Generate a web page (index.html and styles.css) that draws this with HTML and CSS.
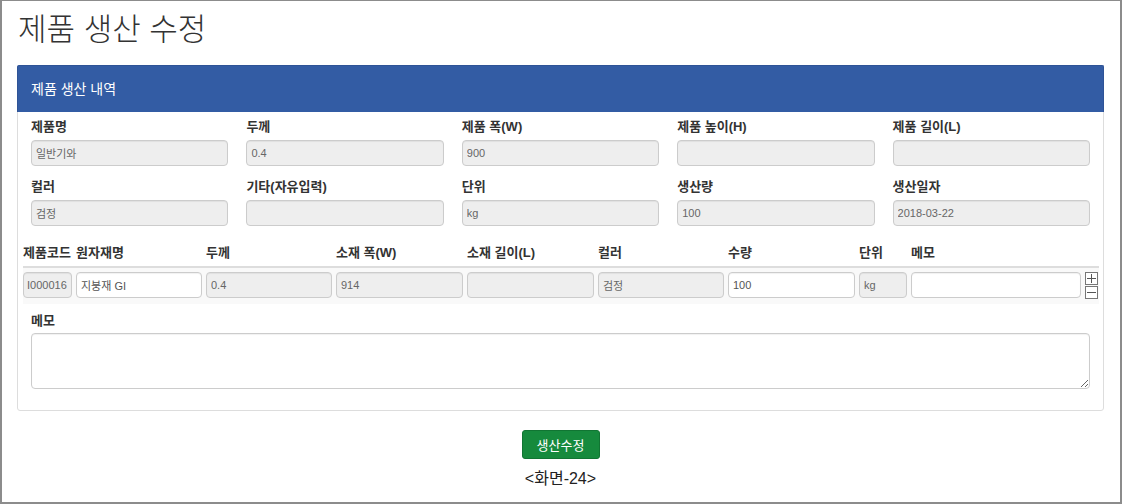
FILE: index.html
```html
<!DOCTYPE html>
<html lang="ko">
<head>
    <meta charset="UTF-8">
    <meta name="viewport" content="width=device-width, initial-scale=1.0">
    <title>제품 생산 수정</title>
    <link rel="stylesheet" href="styles.css">
</head>
<body>
    <div class="frame">
        <h1 class="page-title">제품 생산 수정</h1>

        <div class="panel">
            <div class="panel-heading">제품 생산 내역</div>
            <div class="panel-body">
                <div class="fields">
                    <div class="field">
                        <label>제품명</label>
                        <input type="text" class="form-control" value="일반기와" disabled>
                    </div>
                    <div class="field">
                        <label>두께</label>
                        <input type="text" class="form-control" value="0.4" disabled>
                    </div>
                    <div class="field">
                        <label>제품 폭(W)</label>
                        <input type="text" class="form-control" value="900" disabled>
                    </div>
                    <div class="field">
                        <label>제품 높이(H)</label>
                        <input type="text" class="form-control" value="" disabled>
                    </div>
                    <div class="field">
                        <label>제품 길이(L)</label>
                        <input type="text" class="form-control" value="" disabled>
                    </div>
                    <div class="field">
                        <label>컬러</label>
                        <input type="text" class="form-control" value="검정" disabled>
                    </div>
                    <div class="field">
                        <label>기타(자유입력)</label>
                        <input type="text" class="form-control" value="" disabled>
                    </div>
                    <div class="field">
                        <label>단위</label>
                        <input type="text" class="form-control" value="kg" disabled>
                    </div>
                    <div class="field">
                        <label>생산량</label>
                        <input type="text" class="form-control" value="100" disabled>
                    </div>
                    <div class="field">
                        <label>생산일자</label>
                        <input type="text" class="form-control" value="2018-03-22" disabled>
                    </div>
                </div>

                <div class="material-table">
                    <div class="material-head">
                        <span>제품코드</span>
                        <span>원자재명</span>
                        <span>두께</span>
                        <span>소재 폭(W)</span>
                        <span>소재 길이(L)</span>
                        <span>컬러</span>
                        <span>수량</span>
                        <span>단위</span>
                        <span>메모</span>
                        <span></span>
                    </div>
                    <div class="material-row">
                        <input type="text" class="form-control code" value="I000016" disabled>
                        <input type="text" class="form-control" value="지붕재 GI">
                        <input type="text" class="form-control" value="0.4" disabled>
                        <input type="text" class="form-control" value="914" disabled>
                        <input type="text" class="form-control" value="" disabled>
                        <input type="text" class="form-control" value="검정" disabled>
                        <input type="text" class="form-control" value="100">
                        <input type="text" class="form-control" value="kg" disabled>
                        <input type="text" class="form-control" value="">
                        <div class="row-buttons">
                            <button class="icon-btn" title="추가">
                                <svg width="13" height="13" viewBox="0 0 13 13"><rect x="0.5" y="0.5" width="12" height="12" fill="#fff" stroke="#777"/><path d="M6.5 2v9M2 6.5h9" stroke="#555" stroke-width="1"/></svg>
                            </button>
                            <button class="icon-btn" title="삭제">
                                <svg width="13" height="13" viewBox="0 0 13 13"><rect x="0.5" y="0.5" width="12" height="12" fill="#fff" stroke="#777"/><path d="M2 6.5h9" stroke="#555" stroke-width="1"/></svg>
                            </button>
                        </div>
                    </div>
                </div>

                <div class="memo">
                    <label>메모</label>
                    <textarea class="form-control memo-box"></textarea>
                </div>
            </div>
        </div>

        <div class="actions">
            <button class="btn-save">생산수정</button>
            <p class="caption">&lt;화면-24&gt;</p>
        </div>
    </div>
</body>
</html>
```

FILE: styles.css
```css
/* 전체 */
body {
    margin: 0;
    padding: 0;
    font-family: "Liberation Sans", "Noto Sans CJK KR", sans-serif;
    background-color: #fff;
    color: #333;
}

.frame {
    height: 504px;
    box-sizing: border-box;
    border: 2px solid #8c8c8c;
    border-top-width: 1px;
    padding: 11px 16px 0 15px;
}

.page-title {
    margin: 0 0 17px 1px;
    font-size: 31px;
    line-height: 36px;
    font-weight: 300;
    color: #333;
}

/* 패널 */
.panel {
    border: 1px solid #ddd;
    border-radius: 3px;
}

.panel-heading {
    background-color: #335ca4;
    color: #fff;
    font-size: 14px;
    height: 46px;
    line-height: 46px;
    padding: 0 13px;
    border-radius: 2px 2px 0 0;
    margin: -1px -1px 0 -1px;
    border: 1px solid #2e5396;
    border-bottom: none;
}

.panel-body {
    padding: 6px 13px 21px 13px;
}

.fields {
    display: grid;
    grid-template-columns: repeat(5, 1fr);
    column-gap: 18px;
    row-gap: 12px;
}

.field label,
.memo label {
    display: block;
    font-size: 13px;
    font-weight: bold;
    line-height: 18px;
    margin-bottom: 4px;
    color: #333;
}

.form-control {
    display: block;
    width: 100%;
    height: 26px;
    box-sizing: border-box;
    padding: 0 4px;
    font-family: "Liberation Sans", "Noto Sans CJK KR", sans-serif;
    font-size: 11px;
    color: #555;
    background-color: #fff;
    border: 1px solid #ccc;
    border-radius: 4px;
    box-shadow: inset 0 1px 1px rgba(0, 0, 0, 0.06);
}

.form-control:disabled {
    background-color: #eee;
    color: #666;
}

/* 원자재 표 */
.material-table {
    margin: 18px -9px 0 -8px;
}

.material-head,
.material-row {
    display: grid;
    grid-template-columns: 49px 126px 126px 127px 127px 126px 127px 48px 170px 14px;
    column-gap: 4px;
}

.material-head {
    font-size: 13px;
    font-weight: bold;
    line-height: 18px;
    padding-bottom: 4px;
    border-bottom: 2px solid #ddd;
}

.material-head span {
    white-space: nowrap;
}

.material-row {
    background-color: #f9f9f9;
    padding: 4px 0 5px 0;
}

.form-control.code {
    padding: 0 3px;
}

.row-buttons {
    display: flex;
    flex-direction: column;
    gap: 1px;
}

.icon-btn {
    padding: 0;
    border: none;
    background: none;
    width: 13px;
    height: 13px;
    cursor: pointer;
}

.icon-btn svg {
    display: block;
}

.memo {
    margin-top: 8px;
}

.memo label {
    margin-bottom: 3px;
}

.memo-box {
    height: 56px;
    resize: vertical;
}

/* 하단 */
.actions {
    text-align: center;
    padding-top: 19px;
}

.btn-save {
    width: 78px;
    height: 29px;
    background-color: #168a3d;
    color: #fff;
    border: 1px solid #117533;
    border-radius: 3px;
    font-family: "Liberation Sans", "Noto Sans CJK KR", sans-serif;
    font-size: 13px;
    cursor: pointer;
}

.caption {
    margin: 10px 0 0 0;
    font-size: 16px;
    line-height: 20px;
    color: #222;
}
```
